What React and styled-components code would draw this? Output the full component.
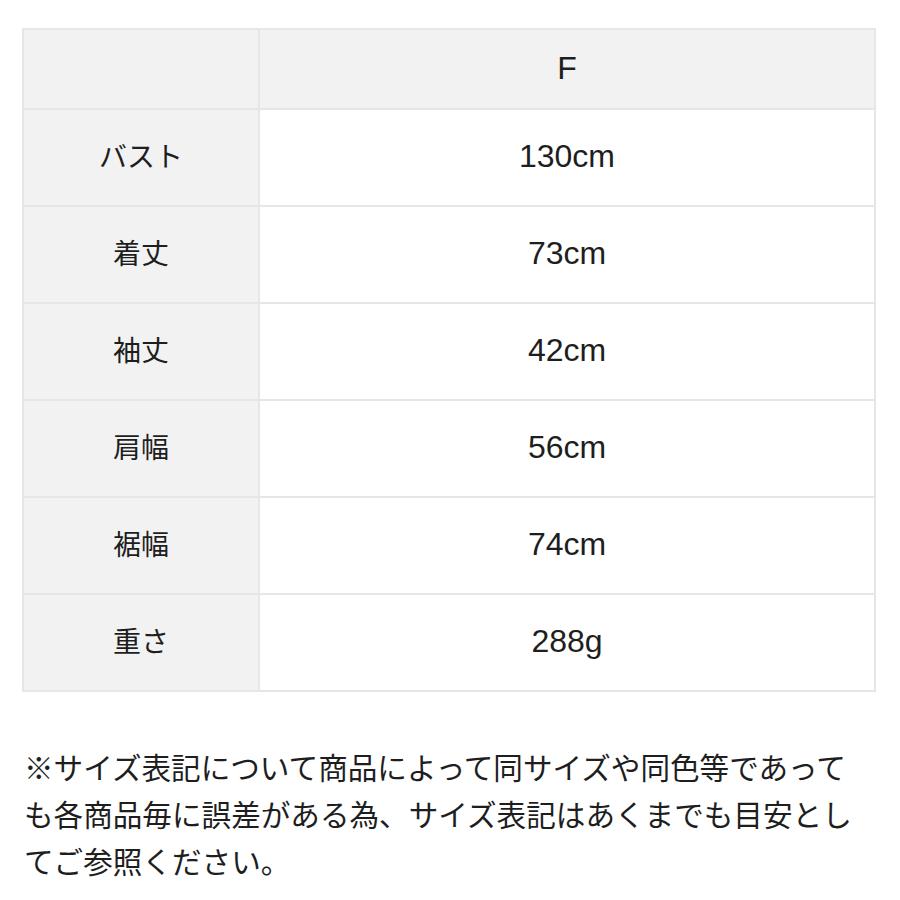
import React from 'react';
import styled, { createGlobalStyle } from 'styled-components';

const GlobalStyle = createGlobalStyle`
  body {
    margin: 0;
    background: #fff;
    font-family: "Noto Sans CJK JP", "Noto Sans", sans-serif;
    color: #222;
  }
`;

const Page = styled.div`
  padding: 28px 24px 0 22px;
`;

const SizeTable = styled.table`
  width: 854px;
  border-collapse: collapse;
  border: 2px solid #e6e6e6;
  table-layout: fixed;
`;

const Cell = styled.td`
  box-sizing: border-box;
  height: ${(p) => (p.$head ? 80 : 97)}px;
  padding: 0 0 ${(p) => (p.$label ? 6 : 2)}px;
  border: 2px solid #e6e6e6;
  background: ${(p) => (p.$shaded ? '#f2f2f2' : '#fff')};
  text-align: center;
  vertical-align: middle;
  font-family: ${(p) =>
    p.$label
      ? '"Noto Sans CJK JP", sans-serif'
      : '"Liberation Sans", "Noto Sans CJK JP", sans-serif'};
  font-size: ${(p) => (p.$label ? 28 : 32)}px;
  color: #1e1e1e;
  width: ${(p) => (p.$label ? '236px' : 'auto')};
`;

const Note = styled.p`
  margin: 51px 0 0 2px;
  font-size: 29.6px;
  line-height: 47px;
  color: #1e1e1e;
  white-space: nowrap;
`;

const rows = [
  ['バスト', '130cm'],
  ['着丈', '73cm'],
  ['袖丈', '42cm'],
  ['肩幅', '56cm'],
  ['裾幅', '74cm'],
  ['重さ', '288g'],
];

const App = () => (
  <Page>
    <GlobalStyle />
    <SizeTable>
      <tbody>
        <tr>
          <Cell $head $shaded $label />
          <Cell $head $shaded>F</Cell>
        </tr>
        {rows.map(([label, value]) => (
          <tr key={label}>
            <Cell $shaded $label>{label}</Cell>
            <Cell>{value}</Cell>
          </tr>
        ))}
      </tbody>
    </SizeTable>
    <Note>
      ※サイズ表記について商品によって同サイズや同色等であって
      <br />
      も各商品毎に誤差がある為、サイズ表記はあくまでも目安とし
      <br />
      てご参照ください。
    </Note>
  </Page>
);

export default App;
